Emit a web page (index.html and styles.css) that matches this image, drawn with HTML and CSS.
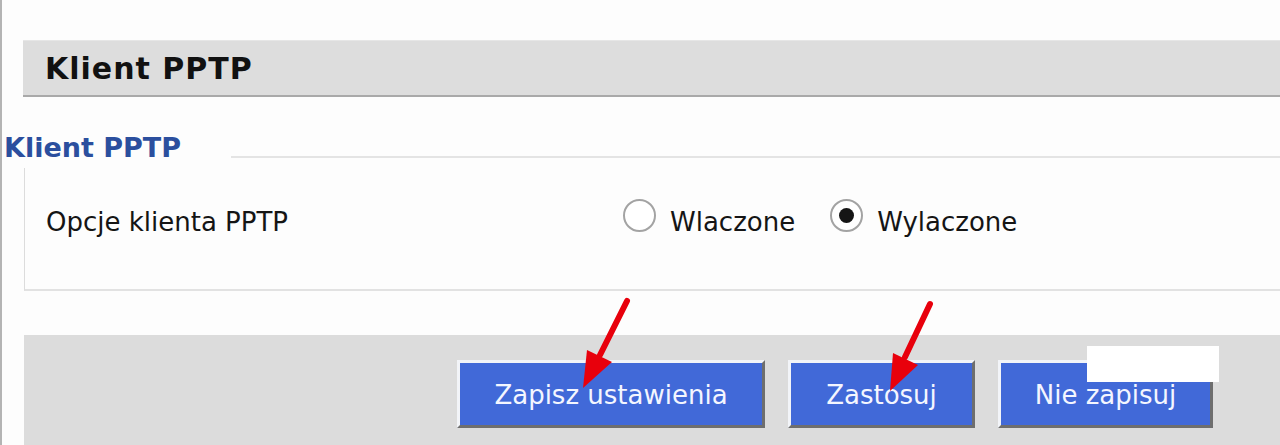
FILE: index.html
```html
<!DOCTYPE html>
<html lang="pl">
<head>
<meta charset="utf-8">
<title>Klient PPTP</title>
<link rel="stylesheet" href="styles.css">
</head>
<body>
<div class="page">
  <div class="titlebar">Klient PPTP</div>

  <div class="section">
    <div class="legend-row">
      <span class="legend">Klient PPTP</span>
      <span class="legend-line"></span>
    </div>
    <div class="box">
      <div class="row">
        <div class="label">Opcje klienta PPTP</div>
        <div class="options">
          <label class="opt"><span class="radio"></span><span class="opt-text">Wlaczone</span></label>
          <label class="opt"><span class="radio checked"></span><span class="opt-text">Wylaczone</span></label>
        </div>
      </div>
    </div>
  </div>

  <div class="footer">
    <button class="btn btn-save">Zapisz ustawienia</button>
    <button class="btn btn-apply">Zastosuj</button>
    <button class="btn btn-cancel">Nie zapisuj</button>
  </div>

  <div class="redact"></div>
  <svg class="arrows" width="1280" height="445" viewBox="0 0 1280 445">
    <g stroke="#e8000c" stroke-width="6" stroke-linecap="round" fill="none">
      <line x1="627" y1="301" x2="600" y2="355"/>
      <line x1="930" y1="304" x2="905" y2="357"/>
    </g>
    <g fill="#e8000c">
      <polygon points="583,388 587,350 612,362"/>
      <polygon points="890,391 893,353 918,365"/>
    </g>
  </svg>
</div>
</body>
</html>
```

FILE: styles.css
```css
* { box-sizing: border-box; }

html, body {
  margin: 0;
  padding: 0;
  background: #fdfdfd;
}

body {
  font-family: "DejaVu Sans", Verdana, sans-serif;
  color: #151515;
  overflow: hidden;
}

.page {
  position: relative;
  width: 1280px;
  height: 445px;
  border-left: 2px solid #b4b4b4;
  padding-top: 40px;
}

.titlebar {
  margin-left: 21px;
  height: 57px;
  background: #dddddd;
  border-top: 1px solid #e6e6e6;
  border-bottom: 2px solid #a9a9a9;
  padding-left: 22px;
  font-weight: bold;
  font-size: 30px;
  letter-spacing: 1px;
  line-height: 56px;
  color: #111;
  overflow: hidden;
}

.section {
  margin-top: 31px;
}

.legend-row {
  display: flex;
  align-items: center;
  height: 40px;
}

.legend {
  margin-left: 2px;
  font-weight: bold;
  font-size: 27px;
  color: #2b4f9e;
  line-height: 40px;
}

.legend-line {
  flex: 1;
  margin-left: 50px;
  margin-top: 18px;
  border-top: 2px solid #e4e4e4;
}

.box {
  margin-left: 22px;
  height: 123px;
  border-left: 1px solid #dcdcdc;
  border-bottom: 2px solid #e2e2e2;
  padding-top: 30px;
}

.row {
  display: flex;
  align-items: center;
  height: 42px;
}

.label {
  width: 598px;
  padding-left: 21px;
  padding-top: 5px;
  font-size: 26px;
}

.options {
  display: flex;
  align-items: center;
  gap: 35px;
}

.opt {
  display: flex;
  align-items: center;
  gap: 14px;
  font-size: 26px;
}

.opt-text {
  padding-top: 5px;
}

.radio {
  width: 33px;
  height: 33px;
  border-radius: 50%;
  border: 2px solid #a3a3a3;
  background: #fff;
  display: flex;
  align-items: center;
  justify-content: center;
  margin-top: -8px;
}

.radio.checked::after {
  content: "";
  width: 15px;
  height: 15px;
  border-radius: 50%;
  background: #151515;
}

.footer {
  margin-top: 44px;
  margin-left: 22px;
  height: 115px;
  background: #dcdcdc;
  display: flex;
  align-items: flex-start;
  gap: 23px;
  padding-left: 433px;
  padding-top: 25px;
}

.btn {
  height: 68px;
  background: #4169d8;
  color: #f4f6ff;
  font-family: "DejaVu Sans", Verdana, sans-serif;
  font-size: 26px;
  border: 3px solid;
  border-color: #f2f4f8 #6e6e6e #6e6e6e #f2f4f8;
  padding: 0;
  padding-top: 2px;
}

.btn-save { width: 308px; }
.btn-apply { width: 187px; }
.btn-cancel { width: 215px; }

.redact {
  position: absolute;
  left: 1085px;
  top: 346px;
  width: 132px;
  height: 36px;
  background: #ffffff;
}

.arrows {
  position: absolute;
  left: -2px;
  top: 0;
  pointer-events: none;
}
```
